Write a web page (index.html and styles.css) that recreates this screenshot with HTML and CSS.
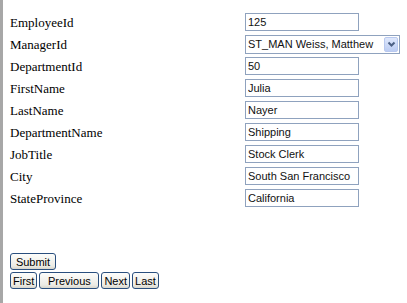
FILE: index.html
```html
<!DOCTYPE html>
<html>
<head>
    <title>Employee</title>
    <meta charset="UTF-8">
    <link rel="stylesheet" href="styles.css">
</head>
<body>
    <div class="page">
        <form class="emp-form">
            <div class="row">
                <label for="employeeid">EmployeeId</label>
                <input type="text" id="employeeid" value="125">
            </div>
            <div class="row">
                <label for="managerid">ManagerId</label>
                <span class="select-wrap">
                    <select id="managerid">
                        <option>ST_MAN Weiss, Matthew</option>
                    </select>
                    <span class="select-arrow">
                        <svg width="9" height="7" viewBox="0 0 9 7"><path d="M1.5 1.5 L4.5 4.5 L7.5 1.5" fill="none" stroke="#4d6185" stroke-width="2"/></svg>
                    </span>
                </span>
            </div>
            <div class="row">
                <label for="departmentid">DepartmentId</label>
                <input type="text" id="departmentid" value="50">
            </div>
            <div class="row">
                <label for="firstname">FirstName</label>
                <input type="text" id="firstname" value="Julia">
            </div>
            <div class="row">
                <label for="lastname">LastName</label>
                <input type="text" id="lastname" value="Nayer">
            </div>
            <div class="row">
                <label for="departmentname">DepartmentName</label>
                <input type="text" id="departmentname" value="Shipping">
            </div>
            <div class="row">
                <label for="jobtitle">JobTitle</label>
                <input type="text" id="jobtitle" value="Stock Clerk">
            </div>
            <div class="row">
                <label for="city">City</label>
                <input type="text" id="city" value="South San Francisco">
            </div>
            <div class="row">
                <label for="stateprovince">StateProvince</label>
                <input type="text" id="stateprovince" value="California">
            </div>

            <div class="buttons">
                <button type="submit" class="btn">Submit</button>
                <div class="nav">
                    <button type="button" class="btn">First</button>
                    <button type="button" class="btn btn-prev">Previous</button>
                    <button type="button" class="btn">Next</button>
                    <button type="button" class="btn">Last</button>
                </div>
            </div>
        </form>
    </div>
</body>
</html>
```

FILE: styles.css
```css
html, body {
  margin: 0;
  height: 100%;
  background-color: #fff;
}

.page {
  height: 100%;
  box-sizing: border-box;
  border-left: 3px solid #a7a7a7;
  padding: 13px 0 0 7px;
  font-family: "Liberation Serif", "Times New Roman", serif;
  font-size: 13px;
  color: #000;
}

.row {
  display: flex;
  align-items: center;
  height: 18px;
  margin-bottom: 4px;
}

.row label {
  width: 235px;
  padding-top: 1px;
}

.row input[type="text"] {
  width: 114px;
  height: 18px;
  box-sizing: border-box;
  border: 1px solid #8fa2be;
  padding: 0 2px;
  margin: 0;
  font-family: "Liberation Sans", Arial, sans-serif;
  font-size: 11px;
  color: #111;
  background-color: #fff;
}

.select-wrap {
  position: relative;
  display: inline-block;
  height: 19px;
}

.select-wrap select {
  -webkit-appearance: none;
  appearance: none;
  width: 155px;
  height: 19px;
  box-sizing: border-box;
  border: 1px solid #8fa2be;
  border-radius: 0;
  padding: 0 2px;
  margin: 0;
  font-family: "Liberation Sans", Arial, sans-serif;
  font-size: 11px;
  color: #111;
  background-color: #fff;
}

.select-arrow {
  position: absolute;
  top: 2px;
  right: 2px;
  width: 14px;
  height: 15px;
  box-sizing: border-box;
  border: 1px solid #b9c9ef;
  border-radius: 2px;
  background: linear-gradient(#dfe8fc, #bccdf3);
  display: flex;
  align-items: center;
  justify-content: center;
  pointer-events: none;
}

.buttons {
  margin-top: 46px;
}

.nav {
  display: flex;
  gap: 2px;
  margin-top: 2px;
}

.btn {
  height: 17px;
  box-sizing: border-box;
  padding: 0 2px;
  margin: 0;
  border: 1px solid #2a4f7e;
  border-radius: 3px;
  background: linear-gradient(#fdfdfb, #ecebe4 80%, #d8d6cc);
  font-family: "Liberation Sans", Arial, sans-serif;
  font-size: 11px;
  color: #000;
  line-height: 14px;
}

.btn[type="submit"] {
  width: 46px;
}

.btn-prev {
  width: 60px;
}
```
